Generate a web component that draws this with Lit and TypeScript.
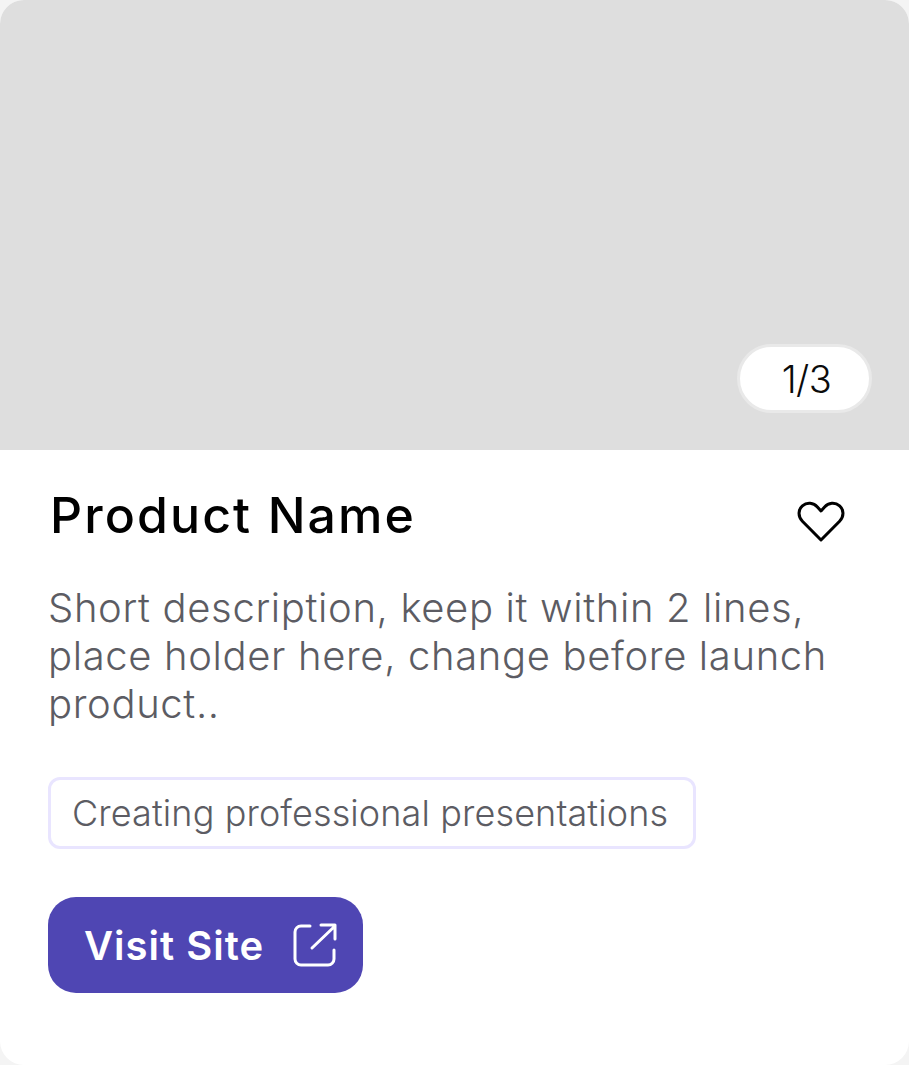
import { LitElement, html, css } from 'lit';
import { customElement } from 'lit/decorators.js';

@customElement('app-root')
export class AppRoot extends LitElement {
  static styles = css`
    :host {
      display: block;
      background: #f4f4f4;
      font-family: 'Inter', 'Liberation Sans', sans-serif;
    }
    .card {
      width: 909px;
      height: 1065px;
      background: #fff;
      border-radius: 24px;
      overflow: hidden;
      display: flex;
      flex-direction: column;
    }
    .media {
      height: 450px;
      flex: none;
      background: #dedede;
      display: flex;
      align-items: flex-end;
      justify-content: flex-end;
      padding: 0 37px 37px 0;
      box-sizing: border-box;
    }
    .count {
      width: 135px;
      height: 69px;
      box-sizing: border-box;
      border: 3px solid #e9e9e9;
      border-radius: 36px;
      padding-left: 4px;
      background: #fff;
      color: #0b0b0b;
      font-size: 38px;
      font-weight: 300;
      letter-spacing: -0.5px;
      display: flex;
      align-items: center;
      justify-content: center;
    }
    .body {
      padding: 35px 48px 0 48px;
      display: flex;
      flex-direction: column;
      align-items: flex-start;
    }
    .head {
      width: 100%;
      height: 60px;
      display: flex;
      justify-content: space-between;
      align-items: center;
      padding-left: 2px;
      box-sizing: border-box;
    }
    .name {
      margin: 0;
      font-size: 50px;
      line-height: 60px;
      font-weight: 500;
      color: #000;
      letter-spacing: 2.1px;
    }
    .heart {
      width: 54px;
      height: 54px;
      margin-right: 13px;
      margin-top: 10px;
      display: block;
    }
    .desc {
      margin: 39px 0 0;
      width: 810px;
      font-size: 40px;
      line-height: 48px;
      letter-spacing: 0.64px;
      font-weight: 300;
      color: #5c5c63;
    }
    .tag {
      margin-top: 49px;
      height: 72px;
      width: 648px;
      box-sizing: border-box;
      border: 3px solid #e9e5ff;
      border-radius: 12px;
      padding: 0 0 0 21px;
      display: flex;
      align-items: center;
      font-size: 36px;
      font-weight: 300;
      letter-spacing: 0.11px;
      color: #5c5c63;
      white-space: nowrap;
    }
    .visit {
      margin-top: 48px;
      width: 315px;
      height: 96px;
      box-sizing: border-box;
      border: 0;
      border-radius: 28px;
      background: #4f46b3;
      color: #fff;
      font: inherit;
      font-size: 40px;
      font-weight: 600;
      letter-spacing: 1px;
      padding: 0 24px 0 36px;
      display: flex;
      align-items: center;
      justify-content: space-between;
    }
    .visit svg {
      width: 48px;
      height: 48px;
      display: block;
    }
  `;

  render() {
    return html`
      <div class="card">
        <div class="media"><div class="count">1/3</div></div>
        <div class="body">
          <div class="head">
            <h2 class="name">Product Name</h2>
            <svg class="heart" viewBox="0 0 54 54" fill="none" stroke="#000" stroke-width="3" stroke-linejoin="round">
              <path d="M27 47 8.4 28.2C3.8 23.4 4 16.6 8.4 12.8c4.6-4 11.2-3.2 15 1.2L27 18l3.6-4c3.8-4.4 10.4-5.2 15-1.2 4.4 3.8 4.6 10.6 0 15.4L27 47Z" />
            </svg>
          </div>
          <p class="desc">Short description, keep it within 2 lines, place holder here, change before launch product..</p>
          <div class="tag">Creating professional presentations</div>
          <button class="visit">
            <span>Visit Site</span>
            <svg viewBox="0 0 48 48" fill="none" stroke="#fff" stroke-width="3" stroke-linecap="round" stroke-linejoin="round">
              <path d="M19 5H10a6 6 0 0 0-6 6v27a6 6 0 0 0 6 6h27a6 6 0 0 0 6-6v-9" />
              <path d="M21 27 44 5M30 4h14v14" />
            </svg>
          </button>
        </div>
      </div>
    `;
  }
}
